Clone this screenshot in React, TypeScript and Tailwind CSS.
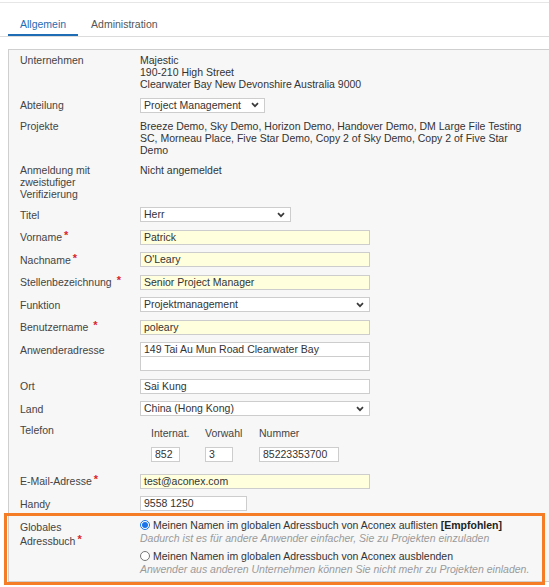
import type { ReactNode } from 'react';

const FONT = { fontFamily: '"Liberation Sans", Arial, sans-serif' };

function Req({ gap }: { gap?: boolean }) {
  return <span className={`relative -top-[2px] text-[11px] font-bold text-[#d9262c] ${gap ? 'ml-[5px]' : 'ml-[2px]'}`}>*</span>;
}

function Chevron() {
  return (
    <svg width="8" height="6" viewBox="0 0 8 6" className="shrink-0">
      <path d="M1 1.2l3 3 3-3" fill="none" stroke="#3a3a3a" strokeWidth="1.7" />
    </svg>
  );
}

function Box({ value = '', yellow, w }: { value?: string; yellow?: boolean; w: string }) {
  return (
    <div className={`h-[15px] ${w} border border-[#cdcdcd] px-[3px] text-[10.5px] leading-[13px] text-[#333] ${yellow ? 'bg-[#ffffdd]' : 'bg-white'}`}>
      {value}
    </div>
  );
}

function Select({ value, w }: { value: string; w: string }) {
  return (
    <div className={`flex h-[15px] ${w} items-center justify-between border border-[#cdcdcd] bg-white pl-[3px] pr-[5px] text-[10.5px] leading-[13px] text-[#333]`}>
      <span>{value}</span>
      <Chevron />
    </div>
  );
}

function Row({ label, children, pad = true }: { label: ReactNode; children: ReactNode; pad?: boolean }) {
  return (
    <div className="flex">
      <div className={`w-[120px] shrink-0 text-[10.5px] leading-[12px] text-[#444] ${pad ? 'pt-[1.5px]' : ''}`}>{label}</div>
      <div className="text-[10.5px] leading-[12px] text-[#333]">{children}</div>
    </div>
  );
}

export default function App() {
  return (
    <div className="relative h-[587px] w-[549px] overflow-hidden bg-white" style={FONT}>
      <div className="mt-[2px] h-px bg-[#e6e6e6]" />
      <div className="flex h-[34px] items-end border-b border-[#dcdcdc] pl-[8px] text-[10.5px] leading-[12px]">
        <div className="border-b-2 border-[#1f6db4] px-[12px] pb-[4px] text-[#1f6db4]">Allgemein</div>
        <div className="px-[13px] pb-[6px] text-[#555]">Administration</div>
      </div>

      <div className="ml-[8px] mt-[12px] w-[560px] border border-[#cfcfcf] bg-[#f7f7f7] pb-[5px] pl-[11px] pt-[4px]">
        <div className="flex flex-col gap-[7.5px]">
          <Row label="Unternehmen" pad={false}>
            <div>Majestic</div>
            <div>190-210 High Street</div>
            <div>Clearwater Bay New Devonshire Australia 9000</div>
          </Row>
          <Row label="Abteilung">
            <Select value="Project Management" w="w-[125px]" />
          </Row>
          <Row label="Projekte" pad={false}>
            <div className="w-[390px]">
              Breeze Demo, Sky Demo, Horizon Demo, Handover Demo, DM Large File Testing SC, Morneau Place, Five Star Demo, Copy 2 of Sky Demo, Copy 2 of Five Star Demo
            </div>
          </Row>
          <Row
            pad={false}
            label={
              <>
                <div>Anmeldung mit</div>
                <div>zweistufiger</div>
                <div>Verifizierung</div>
              </>
            }
          >
            <div>Nicht angemeldet</div>
          </Row>
          <Row label="Titel">
            <Select value="Herr" w="w-[151px]" />
          </Row>
          <Row label={<>Vorname<Req /></>}>
            <Box value="Patrick" yellow w="w-[230px]" />
          </Row>
          <Row label={<>Nachname<Req /></>}>
            <Box value="O'Leary" yellow w="w-[230px]" />
          </Row>
          <Row label={<>Stellenbezeichnung<Req gap /></>}>
            <Box value="Senior Project Manager" yellow w="w-[230px]" />
          </Row>
          <Row label="Funktion">
            <Select value="Projektmanagement" w="w-[230px]" />
          </Row>
          <Row label={<>Benutzername<Req gap /></>}>
            <Box value="poleary" yellow w="w-[230px]" />
          </Row>
          <Row label="Anwenderadresse">
            <Box value="149 Tai Au Mun Road Clearwater Bay" w="w-[230px]" />
            <div className="-mt-px">
              <Box w="w-[230px]" />
            </div>
          </Row>
          <Row label="Ort">
            <Box value="Sai Kung" w="w-[230px]" />
          </Row>
          <Row label="Land">
            <Select value="China (Hong Kong)" w="w-[230px]" />
          </Row>
          <Row label="Telefon" pad={false}>
            <div className="pb-[4.5px] pl-[11px] pt-[3px]">
              <div className="grid grid-cols-[54px_54px_auto] text-[#444]">
                <div>Internat.</div>
                <div>Vorwahl</div>
                <div>Nummer</div>
              </div>
              <div className="mt-[8px] grid grid-cols-[54px_54px_auto]">
                <Box value="852" w="w-[29px]" />
                <Box value="3" w="w-[28px]" />
                <Box value="85223353700" w="w-[80px]" />
              </div>
            </div>
          </Row>
          <Row label={<>E-Mail-Adresse<Req /></>}>
            <Box value="test@aconex.com" yellow w="w-[230px]" />
          </Row>
          <Row label="Handy">
            <Box value="9558 1250" w="w-[107px]" />
          </Row>
          <div className="flex">
            <div className="w-[120px] shrink-0 pt-px text-[10.5px] leading-[14px] text-[#444]">
              <div>Globales</div>
              <div>Adressbuch<Req /></div>
            </div>
            <div className="text-[10.5px] leading-[13px]">
              <div className="flex items-center text-[#333]">
                <span className="mr-[3px] flex h-[10px] w-[10px] items-center justify-center rounded-full border border-[#1a73e8] bg-white">
                  <span className="h-[6px] w-[6px] rounded-full bg-[#1a73e8]" />
                </span>
                <span>Meinen Namen im globalen Adressbuch von Aconex auflisten <b className="text-[#222]">[Empfohlen]</b></span>
              </div>
              <div className="italic text-[#9a9a9a]">Dadurch ist es für andere Anwender einfacher, Sie zu Projekten einzuladen</div>
              <div className="mt-[5px] flex items-center text-[#333]">
                <span className="mr-[3px] h-[10px] w-[10px] rounded-full border border-[#767676] bg-white" />
                <span>Meinen Namen im globalen Adressbuch von Aconex ausblenden</span>
              </div>
              <div className="italic text-[#9a9a9a]">Anwender aus anderen Unternehmen können Sie nicht mehr zu Projekten einladen.</div>
            </div>
          </div>
        </div>
      </div>

      <div className="pointer-events-none absolute left-[4px] top-[513px] h-[72px] w-[541px] border-[3px] border-[#f47d26]" />
    </div>
  );
}
